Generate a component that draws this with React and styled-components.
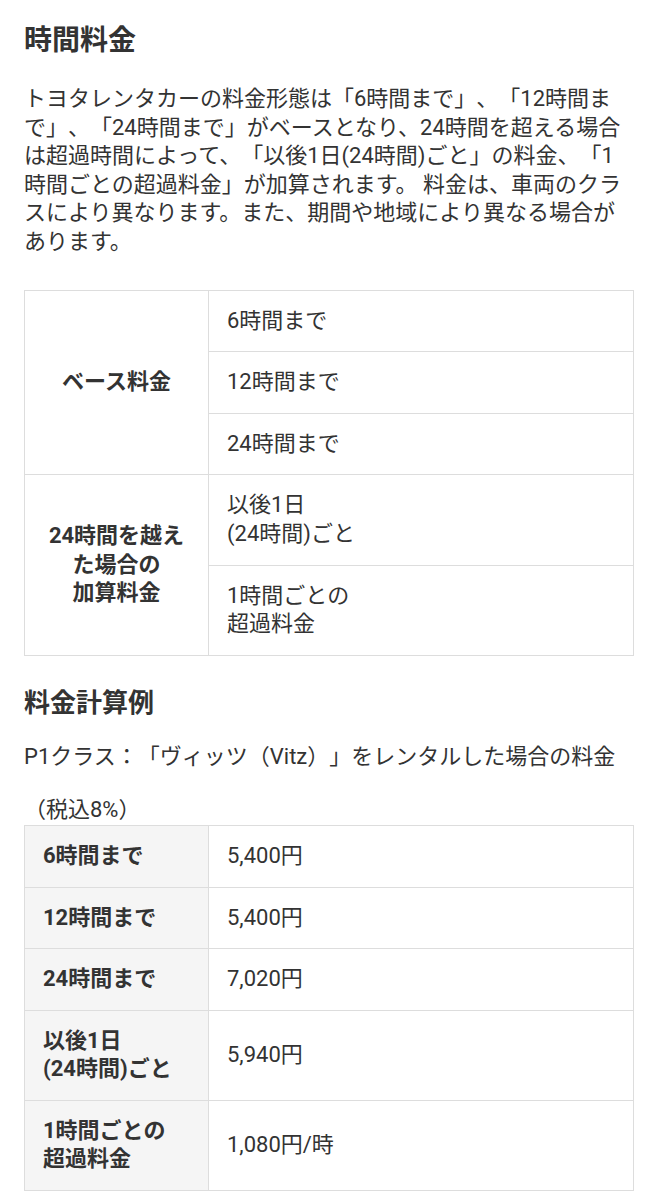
import styled, { createGlobalStyle } from "styled-components";

const GlobalStyle = createGlobalStyle`
  body {
    margin: 0;
    background: #fff;
    font-family: Roboto, "Noto Sans CJK JP", sans-serif;
    color: #333;
    text-spacing-trim: space-all;
  }
`;

const Page = styled.div`
  padding: 23px 24px 0;
`;

const Title = styled.h2`
  margin: 0;
  font-size: 28px;
  line-height: 36px;
  font-weight: 700;
`;

const SubTitle = styled.h3`
  margin: 30px 0 0;
  font-size: 26px;
  line-height: 34px;
  font-weight: 700;
`;

const Text = styled.p`
  margin: ${(p) => p.$top || 0}px 0 0;
  font-size: 22px;
  line-height: 1.3;
`;

const Table = styled.table`
  width: 100%;
  margin-top: ${(p) => p.$top || 0}px;
  border-collapse: collapse;
  font-size: 22px;
  line-height: 1.3;
`;

const Caption = styled.caption`
  text-align: left;
  font-size: 22px;
  line-height: 1.3;
  margin-top: 25px;
`;

const Head = styled.th`
  width: 147px;
  padding: 16px 18px;
  border: 1px solid #ddd;
  font-weight: 700;
  text-align: ${(p) => (p.$center ? "center" : "left")};
  background: ${(p) => (p.$center ? "#fff" : "#f5f5f5")};
  vertical-align: middle;
`;

const Cell = styled.td`
  padding: 16px 18px;
  border: 1px solid #ddd;
  vertical-align: middle;
`;

const prices = [
  ["6時間まで", "5,400円"],
  ["12時間まで", "5,400円"],
  ["24時間まで", "7,020円"],
  [["以後1日", "(24時間)ごと"], "5,940円"],
  [["1時間ごとの", "超過料金"], "1,080円/時"],
];

const Lines = ({ value }) =>
  Array.isArray(value)
    ? value.map((v, i) => (
        <span key={i}>
          {i > 0 && <br />}
          {v}
        </span>
      ))
    : value;

export default function App() {
  return (
    <Page>
      <GlobalStyle />
      <Title>時間料金</Title>
      <Text $top={26}>
        トヨタレンタカーの料金形態は「6時間まで」、「12時間まで」、「24時間まで」がベースとなり、24時間を超える場合は超過時間によって、「以後1日(24時間)ごと」の料金、「1時間ごとの超過料金」が加算されます。 料金は、車両のクラスにより異なります。また、期間や地域により異なる場合があります。
      </Text>

      <Table $top={33}>
        <tbody>
          <tr>
            <Head $center rowSpan={3}>ベース料金</Head>
            <Cell>6時間まで</Cell>
          </tr>
          <tr>
            <Cell>12時間まで</Cell>
          </tr>
          <tr>
            <Cell>24時間まで</Cell>
          </tr>
          <tr>
            <Head $center rowSpan={2}>
              24時間を越え
              <br />
              た場合の
              <br />
              加算料金
            </Head>
            <Cell>
              以後1日
              <br />
              (24時間)ごと
            </Cell>
          </tr>
          <tr>
            <Cell>
              1時間ごとの
              <br />
              超過料金
            </Cell>
          </tr>
        </tbody>
      </Table>

      <SubTitle>料金計算例</SubTitle>
      <Text $top={23}>P1クラス：「ヴィッツ（Vitz）」をレンタルした場合の料金</Text>

      <Table>
        <Caption>（税込8%）</Caption>
        <tbody>
          {prices.map(([label, price], i) => (
            <tr key={i}>
              <Head>
                <Lines value={label} />
              </Head>
              <Cell>{price}</Cell>
            </tr>
          ))}
        </tbody>
      </Table>
    </Page>
  );
}
